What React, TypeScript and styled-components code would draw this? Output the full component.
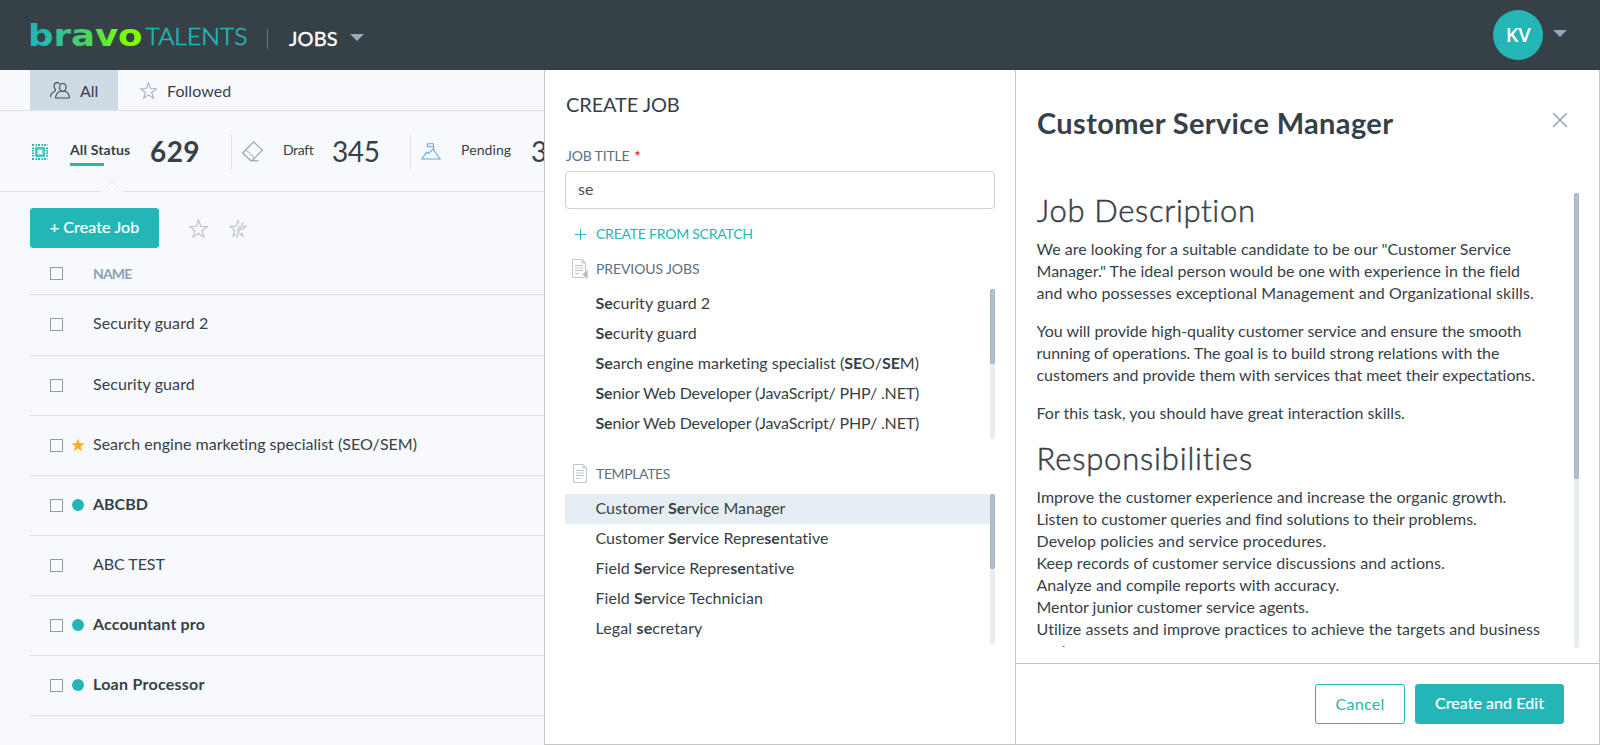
import React from "react";
import styled, { createGlobalStyle, css } from "styled-components";

const color = {
  ink: "#364147",
  teal: "#24b6b6",
  muted: "#5c7080",
  line: "#dfe3e9",
  edge: "#c4c6c8",
  steel: "#8aa3b3",
};

const GlobalStyle = createGlobalStyle`
  *, *::before, *::after { box-sizing: border-box; }
  body {
    margin: 0;
    overflow: hidden;
    background: #fff;
    color: ${color.ink};
    font: 400 16px/22px Lato, "Liberation Sans", sans-serif;
    font-variant-ligatures: none;
  }
  h1, h2, h3, p { margin: 0; font-weight: 400; }
  button, input { font: inherit; color: inherit; }
  svg { display: block; flex: none; }
`;

const Tracked = styled.span<{ $track?: number }>`
  letter-spacing: ${(p) => p.$track ?? 0}px;
  white-space: nowrap;
`;

const Page = styled.div`
  display: flex;
  flex-direction: column;
  width: 1600px;
  height: 745px;
`;

/* Top bar */

const TopBar = styled.header`
  display: flex;
  align-items: center;
  flex: none;
  height: 70px;
  padding: 0 33px 0 30px;
  background: ${color.ink};
`;

const Section = styled.div`
  display: flex;
  align-items: center;
  height: 20px;
  margin: 7px 0 0 20px;
  padding: 0 0 2px 21px;
  border-left: 1px solid #6d7880;
  color: #fff;
  font-size: 20px;
  -webkit-text-stroke: 0.35px #fff;
`;

const Account = styled.div`
  display: flex;
  align-items: center;
  gap: 10px;
  margin-left: auto;
`;

const Avatar = styled.div`
  display: flex;
  align-items: center;
  justify-content: center;
  width: 50px;
  height: 50px;
  border-radius: 50%;
  background: ${color.teal};
  color: #fff;
  font: 600 20px/24px "Open Sans", sans-serif;
`;

const Caret = styled.span<{ $gap?: number; $lift?: number }>`
  width: 0;
  height: 0;
  margin-left: ${(p) => p.$gap ?? 0}px;
  margin-bottom: ${(p) => p.$lift ?? 0}px;
  border: 7px solid transparent;
  border-top-color: #9aa6bd;
  border-bottom: 0;
`;

/* Jobs list */

const Body = styled.div`
  display: flex;
  flex: 1;
  min-height: 0;
`;

const Jobs = styled.main`
  width: 544px;
  overflow: hidden;
  background: #f8f9fd;
`;

const Tabs = styled.nav`
  display: flex;
  height: 41px;
  padding-left: 30px;
  border-bottom: 1px solid #d8e3ec;
`;

const Tab = styled.div<{ $active?: boolean }>`
  display: flex;
  align-items: center;
  gap: 10px;
  height: 40px;
  padding: 0 20px 0 ${(p) => (p.$active ? 20 : 22)}px;
  ${(p) =>
    p.$active &&
    css`
      width: 88px;
      background: #cfdbe4;
    `}
  ${Tracked} {
    padding-top: 2px;
  }
`;

const Statuses = styled.div`
  position: relative;
  display: flex;
  align-items: center;
  height: 81px;
  padding: 2px 0 0 30px;
  border-bottom: 1px solid ${color.line};
`;

const Notch = styled.svg`
  position: absolute;
  left: 101px;
  bottom: -1px;
`;

const Status = styled.div<{ $first?: boolean }>`
  display: flex;
  align-items: center;
  flex: none;
  height: 34px;
  padding: 0 31px 0 ${(p) => (p.$first ? 0 : 10)}px;
  border-right: 1px solid ${color.line};
`;

const StatusIcon = styled.span<{ $width: number }>`
  display: flex;
  justify-content: center;
  width: ${(p) => p.$width}px;
  margin: 0 20px 1px 0;
`;

const StatusLabel = styled.span<{ $width: number; $active?: boolean; $track: number }>`
  position: relative;
  width: ${(p) => p.$width}px;
  margin: 0 20px 4px 0;
  font-size: 14px;
  font-weight: ${(p) => (p.$active ? 700 : 400)};
  letter-spacing: ${(p) => p.$track}px;
  white-space: nowrap;
  ${(p) =>
    p.$active &&
    css`
      &::after {
        content: "";
        position: absolute;
        left: 0;
        bottom: -5px;
        width: 34px;
        height: 3px;
        background: ${color.teal};
      }
    `}
`;

const Count = styled.span<{ $active?: boolean; $width: number }>`
  width: ${(p) => p.$width}px;
  padding-bottom: 3px;
  font-size: 28px;
  line-height: 34px;
  font-weight: ${(p) => (p.$active ? 700 : 400)};
  letter-spacing: ${(p) => (p.$active ? 0.4 : -0.4)}px;
`;

const Toolbar = styled.div`
  display: flex;
  align-items: center;
  gap: 22px;
  padding: 16px 0 0 30px;
`;

const Button = styled.button<{ $outline?: boolean; $width: number }>`
  width: ${(p) => p.$width}px;
  height: 40px;
  padding: 0 0 ${(p) => (p.$outline ? 0 : 2)}px;
  border: 1px solid ${color.teal};
  border-radius: 3px;
  background: ${(p) => (p.$outline ? "#fff" : color.teal)};
  color: ${(p) => (p.$outline ? color.teal : "#fff")};
  -webkit-text-stroke: ${(p) => (p.$outline ? 0 : 0.2)}px currentColor;
`;

const StarTools = styled.div`
  display: flex;
  align-items: center;
  gap: 21px;
  margin: 1px 0 0 8px;
`;

const Table = styled.div`
  margin-left: 30px;
`;

const HeadRow = styled.div`
  display: flex;
  align-items: center;
  height: 47px;
  padding: 5px 0 0 20px;
  border-bottom: 1px solid #d8e3ec;
  color: ${color.steel};
  font-size: 14px;
  font-weight: 700;
`;

const Row = styled.div<{ $unread?: boolean }>`
  display: flex;
  align-items: center;
  height: 60px;
  padding-left: 20px;
  border-bottom: 1px solid ${color.line};
  font-weight: ${(p) => (p.$unread ? 700 : 400)};
  ${HeadRow} + & {
    height: 61px;
    padding-bottom: 1px;
  }
  ${Tracked} {
    padding-bottom: 3px;
  }
`;

const Checkbox = styled.span`
  width: 13px;
  height: 13px;
  border: 1px solid #86a0b0;
`;

const Marker = styled.span`
  display: flex;
  justify-content: center;
  width: 12px;
  margin: 0 9px 1px;
`;

const Dot = styled.span`
  width: 12px;
  height: 12px;
  border-radius: 50%;
  background: ${color.teal};
`;

/* Create panel */

const CreatePanel = styled.section`
  width: 471px;
  padding: 19px 20px 0;
  border-left: 1px solid ${color.edge};
  border-bottom: 1px solid ${color.edge};
  background: #fff;
`;

const PanelTitle = styled.h2`
  padding-left: 1px;
  font-size: 20px;
  line-height: 30px;
`;

const FieldLabel = styled.label`
  display: block;
  margin-top: 27px;
  padding-left: 1px;
  color: ${color.muted};
  font-size: 14px;
  line-height: 20px;
`;

const Required = styled.span`
  margin-left: 5px;
  color: #f11;
  font-weight: 700;
`;

const TitleInput = styled.input`
  display: block;
  width: 430px;
  height: 38px;
  margin: 5px 0 10px;
  padding: 0 12px 3px;
  border: 1px solid #cdd1dc;
  border-radius: 4px;
  outline: 0;
  color: #495057;
`;

const GroupHead = styled.div<{ $accent?: boolean; $top?: number }>`
  display: flex;
  align-items: center;
  height: 30px;
  margin: ${(p) => p.$top ?? 0}px 0 5px;
  color: ${(p) => (p.$accent ? color.teal : color.muted)};
  font-size: 14px;
`;

const GroupIcon = styled.span`
  display: flex;
  justify-content: center;
  width: 30px;
  margin-right: 1px;
`;

const Options = styled.div`
  display: flex;
  width: 430px;
  height: 150px;
`;

const OptionList = styled.div`
  flex: 1;
`;

const Option = styled.div<{ $selected?: boolean; $track: number }>`
  height: 30px;
  padding: 3px 0 0 30.5px;
  background: ${(p) => (p.$selected ? "#e6eef4" : "transparent")};
  letter-spacing: ${(p) => p.$track}px;
  white-space: nowrap;
  b {
    letter-spacing: ${(p) => p.$track - 0.05}px;
  }
`;

const ScrollTrack = styled.div`
  flex: none;
  width: 5px;
  border-radius: 2px;
  background: #e6eef4;
`;

const ScrollThumb = styled.div<{ $height: number }>`
  height: ${(p) => p.$height}px;
  border: 1px solid #a6b2bc;
  border-radius: 2px;
  background: #b4c0ca;
`;

/* Preview panel */

const Preview = styled.section`
  display: flex;
  flex-direction: column;
  width: 585px;
  border: 1px solid ${color.edge};
  border-top: 0;
  background: #fff;
`;

const PreviewHead = styled.div`
  display: flex;
  align-items: flex-start;
  justify-content: space-between;
  height: 123px;
  padding: 34px 31px 0 21px;
`;

const PreviewTitle = styled.h1`
  font-size: 29px;
  line-height: 37px;
  font-weight: 700;
  letter-spacing: 0.36px;
`;

const CloseIcon = styled.svg`
  margin-top: 8px;
`;

const PreviewScroll = styled.div`
  display: flex;
  justify-content: space-between;
  height: 455px;
  padding: 0 20px 0 20.5px;
  overflow: hidden;
`;

const Article = styled.div`
  height: 454px;
  overflow: hidden;
`;

const Heading = styled.h3<{ $track: number; $top?: number }>`
  margin: ${(p) => p.$top ?? 0}px 0 12px;
  padding-top: 1px;
  font-size: 31px;
  line-height: 32px;
  font-weight: 300;
  letter-spacing: ${(p) => p.$track}px;
  -webkit-text-stroke: 0.5px currentColor;
`;

const Paragraph = styled.p`
  display: flex;
  flex-direction: column;
  & + & {
    margin-top: 16px;
  }
`;

const PreviewFoot = styled.footer`
  display: flex;
  justify-content: flex-end;
  gap: 10px;
  margin-top: 15px;
  padding: 20px 35px 0 0;
  border-top: 1px solid ${color.edge};
`;

/* Icons */

const STAR = "M10 1.500 12.200 7.600 18.600 7.800 13.500 11.800 15.300 18 10 14.400 4.700 18 6.500 11.800 1.400 7.800 7.800 7.600Z";

const Logo = () => (
  <svg width="217" height="30" viewBox="0 0 217 30">
    <defs>
      <linearGradient id="brand" gradientUnits="userSpaceOnUse" x1="0" y1="0" x2="112" y2="0">
        <stop offset="0.1" stopColor="#24b6b6" />
        <stop offset="0.55" stopColor="#4fd957" />
        <stop offset="0.85" stopColor="#7dff00" />
      </linearGradient>
    </defs>
    <text x="-2" y="26" fontFamily="DejaVu Sans" fontWeight="700" fontSize="31" textLength="114.500" lengthAdjust="spacingAndGlyphs" fill="url(#brand)">
      bravo
    </text>
    <text x="115.500" y="25" fontFamily="Lato" fontWeight="300" fontSize="24" textLength="102" lengthAdjust="spacingAndGlyphs" fill="#24b6b6" stroke="#24b6b6" strokeWidth="0.600">
      TALENTS
    </text>
  </svg>
);

const PeopleIcon = () => (
  <svg width="20" height="17" viewBox="0 0 20 17" fill="none" stroke="#3f4c55" strokeWidth="1.100" strokeLinecap="round" strokeLinejoin="round">
    <path d="M9.200 1.400C8.600.8 7.900.6 7.200.6 5.300.6 4.100 2 4.100 4c0 1.500.5 2.700 1.300 3.500.3.900-.1 1.400-1 1.900C2 10.400.7 12 .6 14.600" />
    <path d="M12.800 1.500c2 0 3.200 1.400 3.200 3.500 0 2.500-1.300 4.400-3.200 4.400S9.600 7.500 9.600 5c0-2.100 1.200-3.500 3.200-3.500Z" />
    <path d="M10.600 9.200c-3 .9-4.600 2.700-5 6.100-.1.500.1.700.6.700h12.700c.5 0 .6-.3.600-.7-.4-3.400-1.900-5.200-4.600-6.100" />
  </svg>
);

const StarIcon = ({ size = 17, stroke = "#a5b1c4" }: { size?: number; stroke?: string }) => (
  <svg width={size} height={size} viewBox="0.800 0.500 18.400 18.400" fill="none" stroke={stroke} strokeWidth="1.200">
    <path d={STAR} />
  </svg>
);

const UnstarIcon = () => (
  <svg width="18" height="20" viewBox="0 0 18 20" fill="none" stroke="#c0c6c9" strokeWidth="1.200">
    <path d="M10.200 4.200 9 1.300 6.900 7.100 1 7.300 5.700 11 4 17l3.200-2.200" />
    <path d="M13.600 7.200H17L12.800 10.800M12.200 13.500 13.900 17 10.900 15" />
    <path d="M14.200 3 7.400 19.300" />
    <path d="M10.800 6.500 8.200 12.500" />
  </svg>
);

const AllStatusIcon = () => (
  <svg width="16" height="16" viewBox="0 0 16 16" fill="none" stroke={color.teal}>
    <path d="M0 1H16M0 15H16" strokeWidth="2" strokeDasharray="2 1.500 1.500 1" />
    <path d="M1 3.500V13M15 3.500V13" strokeWidth="2" strokeDasharray="1.500 1" />
    <rect x="4" y="4" width="8" height="8" strokeWidth="1.600" />
    <rect x="5.500" y="5.500" width="5" height="5" strokeWidth="0.500" />
  </svg>
);

const EraserIcon = () => (
  <svg width="21" height="21" viewBox="0 0 21 21" fill="none" stroke="#8ba3b2" strokeWidth="1.100" strokeLinejoin="round">
    <path d="M11.600.8 20.400 9.200 10.200 19.500H8.600L.7 12Z" />
    <path d="M3.900 8.700 12.600 17" strokeDasharray="1.400 0.600" />
    <path d="M9 19.800H16.500" />
  </svg>
);

const MountainIcon = () => (
  <svg width="20" height="17" viewBox="0 0 20 17" fill="none" stroke="#58b0e6" strokeWidth="1.100">
    <path d="M.9 16 4.800 10.300 6 9.300 7.500 10.300 12 6.200 19.200 16Z" />
    <path d="M12.500 6.500V.8H6.500V3.800H12.500" />
  </svg>
);

const PlusIcon = () => (
  <svg width="11" height="11" viewBox="0 0 11 11" stroke={color.teal}>
    <path d="M5.500 0V11M0 5.500H11" />
  </svg>
);

const DocumentIcon = ({ previous }: { previous?: boolean }) => (
  <svg width={previous ? 16 : 14} height="20" viewBox={previous ? "0 0 16 20" : "0 0 14 20"} fill="none" stroke="#bfc7d5">
    <path d="M.5.5H10L13.500 4V18.500H.5Z" />
    <path d="M10 .5V4H13.500Z" fill="#dfe3ea" />
    <path d="M3 6.500H11M3 9H11M3 11.500H11M3 14.500H7.500" />
    {previous && <path d="M15.800 10.500 10 15.500 15.800 20Z" fill="#b4bfce" stroke="#fff" strokeWidth="0.300" />}
  </svg>
);

/* Data */

type Job = { name: string; track: number; unread?: boolean; starred?: boolean };

const jobs: Job[] = [
  { name: "Security guard 2", track: 0.08 },
  { name: "Security guard", track: 0.08 },
  { name: "Search engine marketing specialist (SEO/SEM)", track: 0.02, starred: true },
  { name: "ABCBD", track: -0.02, unread: true },
  { name: "ABC TEST", track: -0.05 },
  { name: "Accountant pro", track: 0.14, unread: true },
  { name: "Loan Processor", track: 0.26, unread: true },
];

const previousJobs: [string, number][] = [
  ["Security guard 2", 0.03],
  ["Security guard", 0.03],
  ["Search engine marketing specialist (SEO/SEM)", 0],
  ["Senior Web Developer (JavaScript/ PHP/ .NET)", -0.13],
  ["Senior Web Developer (JavaScript/ PHP/ .NET)", -0.13],
];

const templates: [string, number][] = [
  ["Customer Service Manager", 0.02],
  ["Customer Service Representative", 0.02],
  ["Field Service Representative", 0.03],
  ["Field Service Technician", 0.04],
  ["Legal secretary", 0.13],
];

const description: [string, number][][] = [
  [
    ['We are looking for a suitable candidate to be our "Customer Service', 0.01],
    ['Manager." The ideal person would be one with experience in the field', 0.015],
    ["and who possesses exceptional Management and Organizational skills.", 0.09],
  ],
  [
    ["You will provide high-quality customer service and ensure the smooth", -0.015],
    ["running of operations. The goal is to build strong relations with the", -0.028],
    ["customers and provide them with services that meet their expectations.", -0.035],
  ],
  [["For this task, you should have great interaction skills.", 0.015]],
];

const responsibilities: [string, number][] = [
  ["Improve the customer experience and increase the organic growth.", 0.045],
  ["Listen to customer queries and find solutions to their problems.", -0.035],
  ["Develop policies and service procedures.", 0.13],
  ["Keep records of customer service discussions and actions.", 0.08],
  ["Analyze and compile reports with accuracy.", 0.01],
  ["Mentor junior customer service agents.", -0.02],
  ["Utilize assets and improve practices to achieve the targets and business", 0.065],
  ["goals.", 0],
];

const query = "se";

const Highlighted = ({ text }: { text: string }) => (
  <>
    {text.split(new RegExp(`(${query})`, "i")).map((part, i) =>
      part.toLowerCase() === query ? <b key={i}>{part}</b> : <React.Fragment key={i}>{part}</React.Fragment>
    )}
  </>
);

const OptionBox = ({ items, selected }: { items: [string, number][]; selected?: number }) => (
  <Options>
    <OptionList>
      {items.map(([text, track], i) => (
        <Option key={i} $track={track} $selected={i === selected}>
          <Highlighted text={text} />
        </Option>
      ))}
    </OptionList>
    <ScrollTrack>
      <ScrollThumb $height={75} />
    </ScrollTrack>
  </Options>
);

const Lines = ({ lines }: { lines: [string, number][] }) => (
  <Paragraph>
    {lines.map(([text, track]) => (
      <Tracked key={text} $track={track}>{text}</Tracked>
    ))}
  </Paragraph>
);

export default function App() {
  return (
    <Page>
      <GlobalStyle />
      <TopBar>
        <Logo />
        <Section>
          <Tracked $track={0.1}>JOBS</Tracked>
          <Caret $gap={12} />
        </Section>
        <Account>
          <Avatar>
            <Tracked $track={-0.3}>KV</Tracked>
          </Avatar>
          <Caret $lift={3} />
        </Account>
      </TopBar>
      <Body>
        <Jobs>
          <Tabs>
            <Tab $active>
              <PeopleIcon />
              <Tracked $track={-0.1}>All</Tracked>
            </Tab>
            <Tab>
              <StarIcon />
              <Tracked $track={0.05}>Followed</Tracked>
            </Tab>
          </Tabs>
          <Statuses>
            <Status $first>
              <StatusIcon $width={20}><AllStatusIcon /></StatusIcon>
              <StatusLabel $active $width={60} $track={0.15}>All Status</StatusLabel>
              <Count $active $width={50}>629</Count>
            </Status>
            <Status>
              <StatusIcon $width={21}><EraserIcon /></StatusIcon>
              <StatusLabel $width={29} $track={-0.4}>Draft</StatusLabel>
              <Count $width={47}>345</Count>
            </Status>
            <Status>
              <StatusIcon $width={20}><MountainIcon /></StatusIcon>
              <StatusLabel $width={50} $track={0.1}>Pending</StatusLabel>
              <Count $width={47}>3</Count>
            </Status>
            <Notch width="22" height="12" viewBox="0 0 22 12" fill="#f8f9fd" stroke="#e6e9ee">
              <path d="M0 12V11.500H1L11 1 21 11.500H22V12" stroke="none" />
              <path d="M0 11.500H1L11 1 21 11.500H22" />
            </Notch>
          </Statuses>
          <Toolbar>
            <Button $width={129}>
              <Tracked $track={0.12}>+ Create Job</Tracked>
            </Button>
            <StarTools>
              <StarIcon size={19} stroke="#c0c6c9" />
              <UnstarIcon />
            </StarTools>
          </Toolbar>
          <Table>
            <HeadRow>
              <Checkbox />
              <Marker />
              <Tracked $track={-0.85}>NAME</Tracked>
            </HeadRow>
            {jobs.map((job) => (
              <Row key={job.name} $unread={job.unread}>
                <Checkbox />
                <Marker>
                  {job.unread && <Dot />}
                  {job.starred && (
                    <svg width="12" height="12" viewBox="1 1 18 17.500" fill="#f6ae1c" stroke="#f6ae1c"><path d={STAR} /></svg>
                  )}
                </Marker>
                <Tracked $track={job.track}>{job.name}</Tracked>
              </Row>
            ))}
          </Table>
        </Jobs>

        <CreatePanel>
          <PanelTitle><Tracked $track={-0.12}>CREATE JOB</Tracked></PanelTitle>
          <FieldLabel>
            <Tracked $track={-0.18}>JOB TITLE</Tracked>
            <Required>*</Required>
          </FieldLabel>
          <TitleInput defaultValue={query} />
          <GroupHead $accent>
            <GroupIcon><PlusIcon /></GroupIcon>
            <Tracked $track={-0.23}>CREATE FROM SCRATCH</Tracked>
          </GroupHead>
          <GroupHead>
            <GroupIcon><DocumentIcon previous /></GroupIcon>
            <Tracked $track={-0.1}>PREVIOUS JOBS</Tracked>
          </GroupHead>
          <OptionBox items={previousJobs} />
          <GroupHead $top={20}>
            <GroupIcon><DocumentIcon /></GroupIcon>
            <Tracked $track={-0.38}>TEMPLATES</Tracked>
          </GroupHead>
          <OptionBox items={templates} selected={0} />
        </CreatePanel>

        <Preview>
          <PreviewHead>
            <PreviewTitle>Customer Service Manager</PreviewTitle>
            <CloseIcon width="16" height="16" viewBox="0 0 16 16" stroke="#98a5bb" strokeWidth="1.600" strokeLinecap="round">
              <path d="M1.500 1.500 14.500 14.500M14.500 1.500 1.500 14.500" />
            </CloseIcon>
          </PreviewHead>
          <PreviewScroll>
            <Article>
              <Heading $track={0.68}>Job Description</Heading>
              {description.map((lines, i) => (
                <Lines key={i} lines={lines} />
              ))}
              <Heading $track={0.82} $top={17}>Responsibilities</Heading>
              <Lines lines={responsibilities} />
            </Article>
            <ScrollTrack>
              <ScrollThumb $height={286} />
            </ScrollTrack>
          </PreviewScroll>
          <PreviewFoot>
            <Button $outline $width={90}>
              <Tracked $track={0.28}>Cancel</Tracked>
            </Button>
            <Button $width={149}>
              <Tracked $track={0.07}>Create and Edit</Tracked>
            </Button>
          </PreviewFoot>
        </Preview>
      </Body>
    </Page>
  );
}
